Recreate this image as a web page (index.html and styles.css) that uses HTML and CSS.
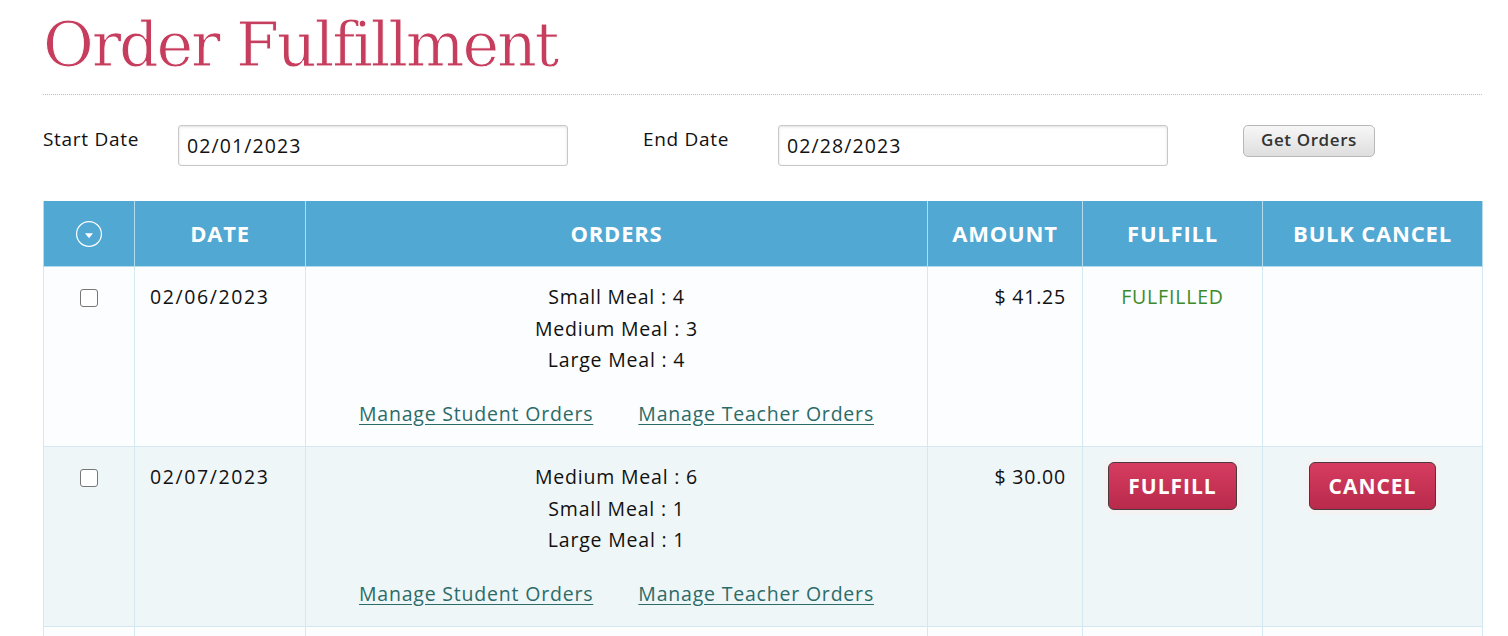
FILE: index.html
```html
<!DOCTYPE html>
<html>
<head>
<meta charset="utf-8">
<link rel="stylesheet" href="styles.css">
</head>
<body>
<div class="page">
  <h1 class="title">Order Fulfillment</h1>
  <div class="filters">
    <label class="flabel">Start Date</label>
    <input class="finput" type="text" value="02/01/2023">
    <label class="flabel">End Date</label>
    <input class="finput" type="text" value="02/28/2023">
    <button class="getbtn">Get Orders</button>
  </div>
  <table class="orders">
    <colgroup>
      <col class="c1"><col class="c2"><col class="c3"><col class="c4"><col class="c5"><col class="c6">
    </colgroup>
    <thead>
      <tr>
        <th><svg class="selicon" width="28" height="28" viewBox="0 0 28 28"><circle cx="14" cy="14" r="12.4" fill="none" stroke="#fff" stroke-width="1.2"/><path d="M10 13.3 L18 13.3 L14 18.3 Z" fill="#fff"/></svg></th>
        <th>DATE</th>
        <th>ORDERS</th>
        <th>AMOUNT</th>
        <th>FULFILL</th>
        <th>BULK CANCEL</th>
      </tr>
    </thead>
    <tbody>
      <tr class="odd">
        <td class="chk"><input type="checkbox" class="cb"></td>
        <td class="date">02/06/2023</td>
        <td class="items">
          <div>Small Meal : 4</div>
          <div>Medium Meal : 3</div>
          <div>Large Meal : 4</div>
          <div class="links"><a href="#">Manage Student Orders</a><a href="#">Manage Teacher Orders</a></div>
        </td>
        <td class="amt">$ 41.25</td>
        <td class="ful"><span class="done">FULFILLED</span></td>
        <td class="bc"></td>
      </tr>
      <tr class="even">
        <td class="chk"><input type="checkbox" class="cb"></td>
        <td class="date">02/07/2023</td>
        <td class="items">
          <div>Medium Meal : 6</div>
          <div>Small Meal : 1</div>
          <div>Large Meal : 1</div>
          <div class="links"><a href="#">Manage Student Orders</a><a href="#">Manage Teacher Orders</a></div>
        </td>
        <td class="amt">$ 30.00</td>
        <td class="ful"><button class="redbtn">FULFILL</button></td>
        <td class="bc"><button class="redbtn">CANCEL</button></td>
      </tr>
      <tr class="odd next">
        <td></td><td></td><td></td><td></td><td></td><td></td>
      </tr>
    </tbody>
  </table>
</div>
</body>
</html>
```

FILE: styles.css
```css
html, body {
  margin: 0;
  padding: 0;
  background: #fff;
}
body {
  font-family: "Open Sans", "Lato", sans-serif;
  color: #111;
}
.page {
  padding: 0 26px 0 43px;
}
.title {
  margin: 0;
  padding-top: 9px;
  height: 95px;
  box-sizing: border-box;
  font-family: "DejaVu Serif", serif;
  font-weight: normal;
  font-size: 62px;
  line-height: 72px;
  color: #c63d5e;
  letter-spacing: -2.2px;
  -webkit-text-stroke: 0.9px #fff;
  border-bottom: 1px dotted #bdbdbd;
}
.filters {
  display: flex;
  align-items: flex-start;
  margin-top: 30px;
}
.flabel {
  width: 135px;
  font-size: 19px;
  line-height: 22px;
  padding-top: 3px;
  letter-spacing: 0.7px;
  color: #111;
}
.finput {
  width: 390px;
  height: 41px;
  box-sizing: border-box;
  border: 1px solid #c8c8c8;
  border-radius: 3px;
  box-shadow: inset 0 1px 3px rgba(0,0,0,0.12);
  padding: 0 8px 0;
  font-family: "Open Sans", "Lato", sans-serif;
  font-size: 19.5px;
  letter-spacing: 1.1px;
  color: #111;
  margin-right: 75px;
  outline: none;
}
.getbtn {
  width: 132px;
  height: 32px;
  border: 1px solid #b8b8b8;
  border-radius: 5px;
  background: linear-gradient(#f7f7f7, #dedede);
  font-family: "Open Sans", "Lato", sans-serif;
  font-weight: 600;
  font-size: 17px;
  letter-spacing: 0.6px;
  color: #333;
  padding: 0 0 3px;
}
.orders {
  margin-top: 35px;
  width: 1439px;
  table-layout: fixed;
  border-collapse: collapse;
}
.c1 { width: 91px; }
.c2 { width: 171px; }
.c3 { width: 622px; }
.c4 { width: 155px; }
.c5 { width: 180px; }
.c6 { width: 220px; }
.orders th {
  height: 63px;
  padding: 0 0 2px;
  background: #50a8d3;
  color: #fff;
  font-weight: bold;
  font-size: 22px;
  text-align: center;
  vertical-align: middle;
  border: 1px solid #b5dcee;
  border-top: none;
  letter-spacing: 0.8px;
}
.selicon {
  display: block;
  margin: 3px auto 0;
}
.orders td {
  border: 1px solid #d3e8f1;
  vertical-align: top;
  padding: 14px 16px 17px;
  font-size: 19.5px;
  line-height: 31.5px;
  letter-spacing: 0.8px;
}
.orders tr.odd td { background: #fbfdfe; }
.orders tr.even td { background: #eff6f8; }
.orders tr.next td { height: 60px; }
.orders td.chk {
  text-align: center;
  padding-left: 0;
  padding-right: 0;
}
.cb {
  appearance: none;
  -webkit-appearance: none;
  width: 18px;
  height: 18px;
  margin: 8px 0 0 0;
  border: 1px solid #777;
  border-radius: 3px;
  background: #fff;
  vertical-align: top;
}
.orders td.date {
  padding-left: 15px;
  letter-spacing: 1.6px;
}
.orders td.items { text-align: center; }
.links {
  margin-top: 22px;
  display: flex;
  justify-content: center;
  gap: 45px;
}
.links a {
  color: #2c6b68;
  text-decoration: underline;
  text-underline-offset: 3px;
}
.orders td.amt { text-align: right; }
.orders td.ful, .orders td.bc { text-align: center; }
.done {
  color: #3b8b2b;
}
.redbtn {
  height: 48px;
  padding: 0 19px;
  margin-top: 1px;
  border: 1px solid #4a3a3f;
  border-radius: 6px;
  background: linear-gradient(#d63c60, #b82a4b);
  color: #fff;
  font-family: "Open Sans", "Lato", sans-serif;
  font-weight: bold;
  font-size: 21px;
  letter-spacing: 1px;
  box-shadow: 0 0 0 4px #f4f2f2;
}
```
